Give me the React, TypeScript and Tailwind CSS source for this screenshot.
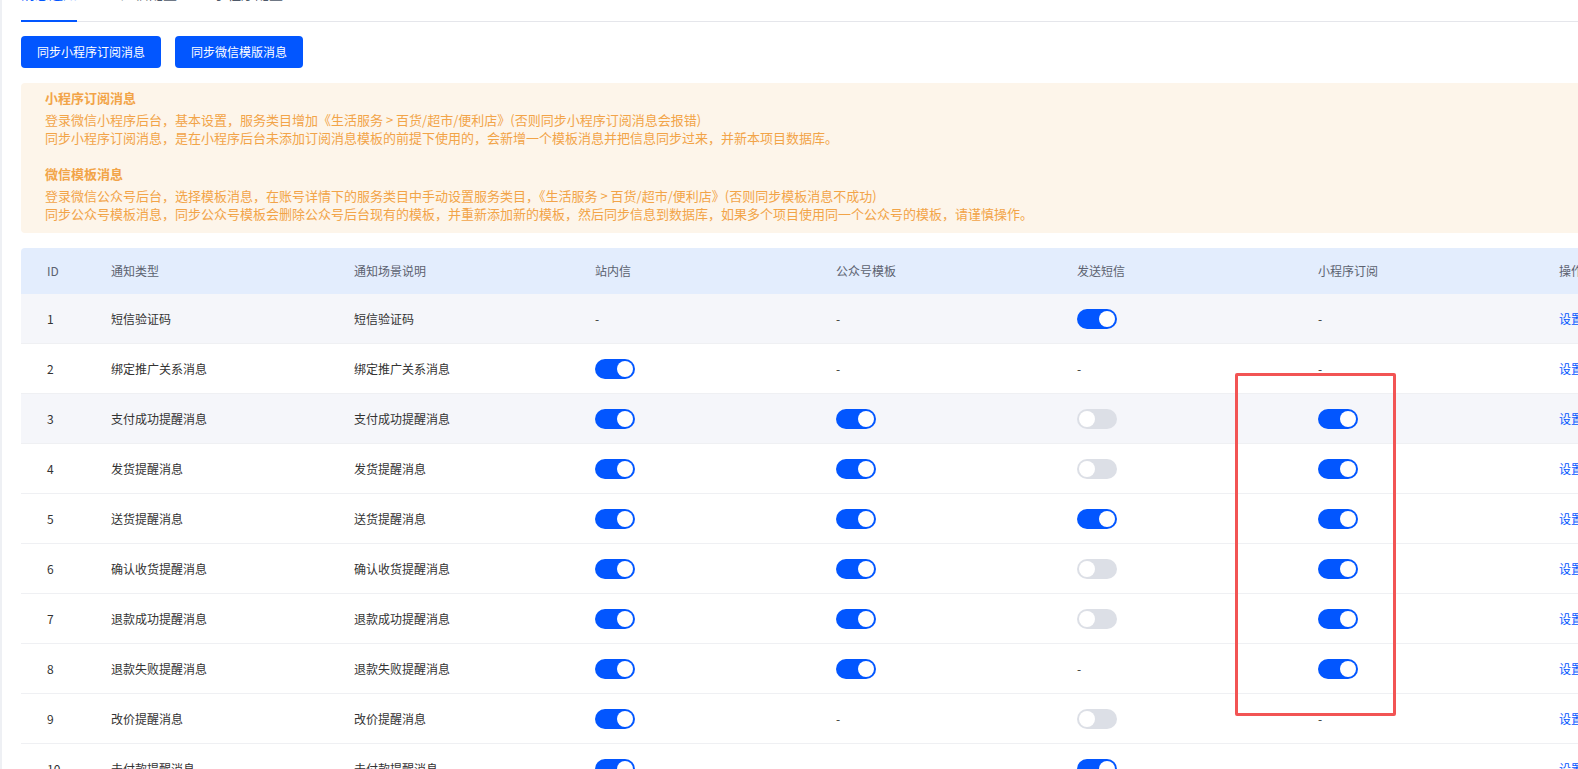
import React, { useState } from "react";

type Cell = "on" | "off" | "-";

type Row = {
  id: number;
  name: string;
  site: Cell;
  wechat: Cell;
  sms: Cell;
  mini: Cell;
};

const rows: Row[] = [
  { id: 1, name: "短信验证码", site: "-", wechat: "-", sms: "on", mini: "-" },
  { id: 2, name: "绑定推广关系消息", site: "on", wechat: "-", sms: "-", mini: "-" },
  { id: 3, name: "支付成功提醒消息", site: "on", wechat: "on", sms: "off", mini: "on" },
  { id: 4, name: "发货提醒消息", site: "on", wechat: "on", sms: "off", mini: "on" },
  { id: 5, name: "送货提醒消息", site: "on", wechat: "on", sms: "on", mini: "on" },
  { id: 6, name: "确认收货提醒消息", site: "on", wechat: "on", sms: "off", mini: "on" },
  { id: 7, name: "退款成功提醒消息", site: "on", wechat: "on", sms: "off", mini: "on" },
  { id: 8, name: "退款失败提醒消息", site: "on", wechat: "on", sms: "-", mini: "on" },
  { id: 9, name: "改价提醒消息", site: "on", wechat: "-", sms: "off", mini: "-" },
  { id: 10, name: "未付款提醒消息", site: "on", wechat: "-", sms: "on", mini: "-" },
];

const cols = "grid grid-cols-[64px_243px_241px_241px_241px_241px_241px_120px]";

const Toggle: React.FC<{ initial: boolean }> = ({ initial }) => {
  const [on, setOn] = useState(initial);
  return (
    <button
      onClick={() => setOn(!on)}
      className={`flex h-5 w-10 items-center rounded-full p-[2px] ${
        on ? "justify-end bg-[#0256ff]" : "justify-start bg-[#dcdfe6]"
      }`}
    >
      <span className="block h-4 w-4 rounded-full bg-white" />
    </button>
  );
};

const Value: React.FC<{ v: Cell }> = ({ v }) =>
  v === "-" ? <span>-</span> : <Toggle initial={v === "on"} />;

const App: React.FC = () => {
  const [tab] = useState(0);
  const tabs = ["消息通知", "短信配置", "小程序配置"];

  return (
    <div className="relative h-[769px] w-[1578px] overflow-hidden border-l-2 border-[#eef0f4] bg-white pl-[19px] font-['Noto_Sans_CJK_SC','Noto_Sans',sans-serif]">
      <div className="w-[1700px]">
        {/* tabs */}
        <div className="-mt-[19px] flex h-[41px] border-b border-[#e5e6eb]">
          {tabs.map((t, i) => (
            <div
              key={t}
              className={`-mb-px h-[41px] pt-[2px] pb-[17px] text-sm leading-[20px] ${
                i === 1 ? "ml-[44px]" : i === 2 ? "ml-[36px]" : ""
              } ${
                i === tab
                  ? "border-b-2 border-[#0256ff] text-[#0256ff]"
                  : "border-b-2 border-transparent text-[#4e5969]"
              }`}
            >
              {t}
            </div>
          ))}
        </div>

        {/* sync buttons */}
        <div className="mt-[14px] flex gap-[14px]">
          <button className="h-8 rounded-[4px] bg-[#0256ff] px-4 text-xs text-white">同步小程序订阅消息</button>
          <button className="h-8 rounded-[4px] bg-[#0256ff] px-4 text-xs text-white">同步微信模版消息</button>
        </div>

        {/* notice */}
        <div className="mt-[15px] h-[150px] w-[1640px] rounded-[4px] bg-[#fdf5ea] pl-6 pt-[6px] text-[13px] leading-[18px] text-[#f2a448]">
          <div className="font-bold">小程序订阅消息</div>
          <div className="mt-1">登录微信小程序后台，基本设置，服务类目增加《生活服务 &gt; 百货/超市/便利店》(否则同步小程序订阅消息会报错)</div>
          <div>同步小程序订阅消息，是在小程序后台未添加订阅消息模板的前提下使用的，会新增一个模板消息并把信息同步过来，并新本项目数据库。</div>
          <div className="mt-[18px] font-bold">微信模板消息</div>
          <div className="mt-1">登录微信公众号后台，选择模板消息，在账号详情下的服务类目中手动设置服务类目，《生活服务 &gt; 百货/超市/便利店》(否则同步模板消息不成功)</div>
          <div>同步公众号模板消息，同步公众号模板会删除公众号后台现有的模板，并重新添加新的模板，然后同步信息到数据库，如果多个项目使用同一个公众号的模板，请谨慎操作。</div>
        </div>

        {/* table */}
        <div className="mt-[15px] text-xs">
          <div className={`${cols} h-[46px] items-center rounded-t-[4px] bg-[#e3edfd] text-[#5c6270]`}>
            {["ID", "通知类型", "通知场景说明", "站内信", "公众号模板", "发送短信", "小程序订阅", "操作"].map((h) => (
              <div key={h} className="pl-[26px]">{h}</div>
            ))}
          </div>
          {rows.map((r) => (
            <div
              key={r.id}
              className={`${cols} h-[50px] items-center border-b border-[#eff0f3] text-[#333] ${
                r.id === 1 || r.id === 3 ? "bg-[#f5f6fa]" : "bg-white"
              }`}
            >
              <div className="pl-[26px]">{r.id}</div>
              <div className="pl-[26px]">{r.name}</div>
              <div className="pl-[26px]">{r.name}</div>
              <div className="pl-[26px]"><Value v={r.site} /></div>
              <div className="pl-[26px]"><Value v={r.wechat} /></div>
              <div className="pl-[26px]"><Value v={r.sms} /></div>
              <div className="pl-[26px]"><Value v={r.mini} /></div>
              <div className="pl-[26px] text-[#0256ff]">设置</div>
            </div>
          ))}
        </div>
      </div>

      {/* highlight frame around the mini program column */}
      <div className="pointer-events-none absolute left-[1233px] top-[373px] h-[343px] w-[161px] rounded-[2px] border-[3px] border-[#f25454]" />
    </div>
  );
};

export default App;
